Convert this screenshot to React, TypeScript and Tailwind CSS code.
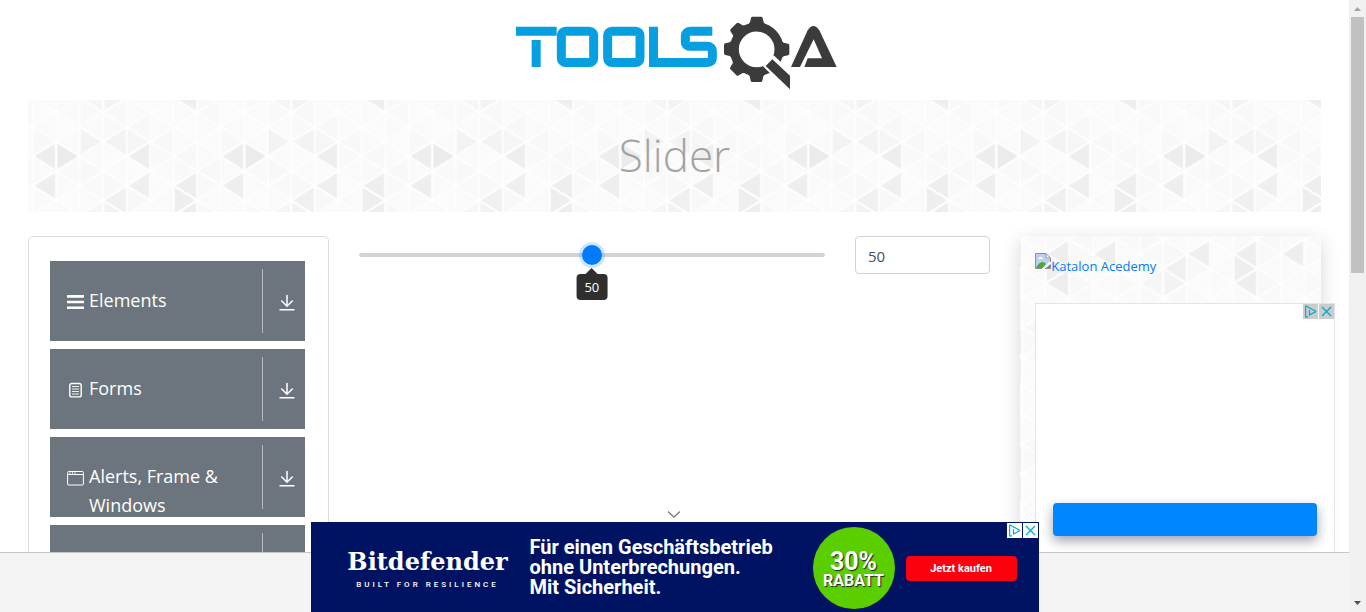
import React, { useState } from "react";

type Tri = [number, number, "l" | "r", string];

const COL = 23.5;
const ROW = 14.667;

// Each triangle: left column index, row index of its middle vertex, direction it points to, fill.
const SHADED: Tri[] = [
  [2, 0, "l", "#f6f6f6"],
  [3, 0, "r", "#f3f3f3"],
  [6, 0, "l", "#eeeeee"],
  [2, 3, "r", "#f3f3f3"],
  [3, 3, "l", "#f3f3f3"],
  [0, 4, "l", "#ededed"],
  [1, 4, "r", "#ebebeb"],
  [4, 4, "l", "#eeeeee"],
  [0, 6, "l", "#eeeeee"],
  [4, 6, "l", "#efefef"],
  [6, 6, "l", "#eeeeee"],
  [6, 7, "r", "#eeeeee"],
  [3, 7, "l", "#f0f0f0"],
  [4, 3, "r", "#f6f6f6"],
];

function triPoints(c: number, r: number, dir: "l" | "r") {
  const x0 = c * COL;
  const x1 = x0 + COL;
  const y = r * ROW;
  return dir === "l"
    ? `${x0},${y} ${x1},${y - ROW} ${x1},${y + ROW}`
    : `${x1},${y} ${x0},${y - ROW} ${x0},${y + ROW}`;
}

const BASE: Tri[] = [];
for (let c = 0; c < 8; c++) {
  for (let r = 0; r < 8; r++) {
    const tone = ["#fafafa", "#f8f8f8", "#fbfbfb", "#f9f9f9", "#fafafa"][(c * 3 + r * 2) % 5];
    BASE.push([c, r, (c + r) % 2 === 0 ? "l" : "r", tone]);
  }
}

// Row 0 straddles the tile's edge, so it is repeated one tile height below.
const TRIANGLES: Tri[] = [...BASE, ...SHADED].flatMap(([c, r, d, f]): Tri[] =>
  r === 0 ? [[c, 0, d, f], [c, 8, d, f]] : [[c, r, d, f]]
);

function Triangles({ id, x, y }: { id: string; x: number; y: number }) {
  return (
    <svg className="absolute inset-0 h-full w-full" aria-hidden="true">
      <defs>
        <pattern id={id} width="188" height="117.333" patternUnits="userSpaceOnUse" patternTransform={`translate(${x} ${y})`}>
          <rect width="188" height="118" fill="#fafafa" />
          {TRIANGLES.map(([c, r, d, fill], i) => (
            <polygon key={i} points={triPoints(c, r, d)} fill={fill} />
          ))}
          {TRIANGLES.map(([c, r, d], i) => (
            <polygon key={i} points={triPoints(c, r, d)} fill="none" stroke="#fefefe" strokeWidth="1.6" strokeLinejoin="round" />
          ))}
        </pattern>
      </defs>
      <rect width="100%" height="100%" fill={`url(#${id})`} />
    </svg>
  );
}

function Logo() {
  return (
    <svg viewBox="0 0 1017 285" className="h-[95px] w-[339px]" role="img" aria-label="Tools QA">
      <g fill="none" stroke="#069fdf" strokeWidth="27">
        <path d="M33 78.500H155M93.500 105V186" />
        <rect x="169" y="78.500" width="97" height="94" rx="13" />
        <rect x="308" y="78.500" width="97" height="94" rx="13" />
        <path d="M445.500 65V172.500H605Q622 172.500 622 158V139Q622 124 605 124H558Q541 124 541 110V94Q541 78.500 558 78.500H622" />
      </g>
      <g fill="#3b3b3c">
        <circle cx="755" cy="133" r="67" fill="none" stroke="#3b3b3c" strokeWidth="27" />
        {[0, 90, 135, 180, 225, 270, 315].map((a) => (
          <path key={a} transform={`rotate(${a} 755 133)`} d="M727 62L735 52L738 39Q739 35 743 35H768Q772 35 773 39L776 52L784 62Z" />
        ))}
        <path d="M806 151L875 216V285L774 184Z" fill="#fff" />
        <path d="M802 163L855 212V253L782 183Z" />
        <path d="M858 186L908 76Q925 50 943 76L995 186H898L908 160H951L926 103L885 186Z" />
      </g>
    </svg>
  );
}

function BarsIcon() {
  return (
    <svg viewBox="0 0 17 16" className="h-4 w-[17px]" fill="#fff" aria-hidden="true">
      <path d="M0 1h17v2.700H0zM0 6.700h17v2.600H0zM0 12.400h17v2.600H0z" />
    </svg>
  );
}

function FormIcon() {
  return (
    <svg viewBox="0 0 17 16" className="h-4 w-[17px]" fill="none" stroke="#fff" aria-hidden="true">
      <rect x="2.800" y="1.500" width="11.400" height="13.400" rx="2" strokeWidth="1.400" />
      <path d="M5 4.500h7M5 7h7M5 9.500h7M5 12h7" strokeWidth=".9" />
    </svg>
  );
}

function WindowIcon() {
  return (
    <svg viewBox="0 0 17 16" className="h-4 w-[17px]" fill="none" stroke="#fff" aria-hidden="true">
      <rect x=".6" y="1.500" width="15.800" height="13.500" rx="1" strokeWidth="1" />
      <path d="M1 4.500h15" strokeWidth="1" />
      <path d="M2.500 3h1M5 3h1M7.500 3h1" strokeWidth="1.400" />
    </svg>
  );
}

function DownloadIcon() {
  return (
    <svg viewBox="0 0 16 17" className="h-[17px] w-4" fill="none" stroke="#fff" strokeWidth="1.500" aria-hidden="true">
      <path d="M8 1v11M2.300 6.500L8 12.200l5.700-5.700M.5 15.800h15" />
    </svg>
  );
}

function MenuItem({ icon, label, name }: { icon?: React.ReactNode; label?: string; name?: string }) {
  return (
    <button type="button" aria-label={name} className="flex h-20 w-full shrink-0 items-start overflow-hidden bg-[#6c757d] text-left text-white">
      <span className="flex flex-1 items-start gap-1 pt-[25px] pl-[17px]">
        <span className="mt-2 w-[18px]">{icon}</span>
        <span className="w-[150px] text-[18px] leading-[29px]">{label}</span>
      </span>
      <span className="mt-2 flex h-16 w-[43px] items-center justify-center border-l border-[#b9babb] pt-[3px] pl-[7px]">
        <DownloadIcon />
      </span>
    </button>
  );
}

function AdControls({ tone }: { tone: "gray" | "white" }) {
  const bg = tone === "gray" ? "bg-[#cccccc]" : "bg-white";
  return (
    <div className="flex gap-px">
      <button type="button" aria-label="AdChoices" className={`flex size-[15px] items-center justify-center ${bg}`}>
        <svg viewBox="0 0 15 15" className="size-[15px]" fill="none" stroke="#00aecd" strokeWidth="1.200">
          <path d="M5 12.700L3.200 13.200Q2.600 13.200 2.600 12.500V2.700Q2.600 1.800 3.500 2.200L12.300 7.100Q12.900 7.500 12.300 7.900L6.500 11V6M6.500 3.800V4.800" />
        </svg>
      </button>
      <button type="button" aria-label="Close ad" className={`flex size-[15px] items-center justify-center ${bg}`}>
        <svg viewBox="0 0 15 15" className="size-[15px]" fill="none" stroke="#00aecd" strokeWidth="1.400">
          <path d="M3 3L12 12M12 3L3 12" />
        </svg>
      </button>
    </div>
  );
}

function BrokenImageIcon() {
  return (
    <svg viewBox="0 0 16 16" className="mt-px size-4 shrink-0" aria-hidden="true">
      <path d="M.5.5H11L15.500 5V15.500H.5Z" fill="#fff" />
      <path d="M1 1H10.500V5.500H15V8L8 15H1Z" fill="#b9cff5" />
      <path d="M3 6Q3 4.500 4.500 4.500Q5.500 3 6.800 4.500Q8 4.700 8 6Z" fill="#fff" />
      <path d="M1 15Q4 9 7.500 9Q9.500 9 11 11L7.500 15ZM11 15L15 11.500V15Z" fill="#4fa82c" />
      <path d="M15.500 9V5L11 .5H.5V15.500H7M11 .5V5H15.500M10 15.500H15.500V11.500" fill="none" stroke="#8f8f8f" />
    </svg>
  );
}

function SliderControl() {
  const [value, setValue] = useState(50);
  return (
    <section className="col-span-2 grid grid-cols-4 items-start gap-[30px]">
      <div className="relative col-span-3 flex h-[38px] items-center">
        <input
          type="range"
          aria-label="Slider"
          min={0}
          max={100}
          value={value}
          onChange={(e) => setValue(Number(e.target.value))}
          className="h-5 w-full appearance-none bg-transparent [&::-webkit-slider-runnable-track]:h-1 [&::-webkit-slider-runnable-track]:rounded-full [&::-webkit-slider-runnable-track]:bg-[#ced4da] [&::-webkit-slider-thumb]:-mt-2 [&::-webkit-slider-thumb]:size-5 [&::-webkit-slider-thumb]:appearance-none [&::-webkit-slider-thumb]:rounded-full [&::-webkit-slider-thumb]:bg-[#007bff] [&::-webkit-slider-thumb]:shadow-[0_0_0_3px_rgba(0,123,255,0.2)]"
        />
        <output
          className="absolute top-8 flex -translate-x-1/2 flex-col items-center"
          style={{ left: `calc(${value}% + ${(50 - value) * 0.2}px)` }}
        >
          <span className="border-x-[6px] border-b-[6px] border-x-transparent border-b-[#2f2f2f]" />
          <span className="rounded bg-[#2f2f2f] px-2 text-[13px] leading-[26px] text-white">{value}</span>
        </output>
      </div>
      <input
        aria-label="Slider value"
        value={value}
        onChange={(e) => setValue(Number(e.target.value) || 0)}
        className="h-[38px] w-full rounded border border-[#ced4da] bg-white px-3 pt-px text-[15px] text-[#495057]"
      />
    </section>
  );
}

export default function App() {
  return (
    <div className="flex h-screen overflow-hidden bg-white font-['Open_Sans','Noto_Sans',sans-serif]">
      <div className="relative min-w-0 flex-1 overflow-hidden">
        <header className="flex h-[100px] items-end justify-center">
          <Logo />
        </header>
        <main className="px-7">
          <div className="relative flex h-28 items-center justify-center overflow-hidden pb-0.5">
            <Triangles id="banner" x={4.7} y={-2.3} />
            <h1 className="relative text-[44px] font-light text-[#a3a3a3]">Slider</h1>
          </div>
          <div className="mt-6 grid grid-cols-4 gap-[30px]">
            <nav className="flex flex-col gap-2 rounded-[5px] border border-[#dddddd] pt-6 pr-[23px] pb-6 pl-[21px]">
              <MenuItem icon={<BarsIcon />} label="Elements" />
              <MenuItem icon={<FormIcon />} label="Forms" />
              <MenuItem icon={<WindowIcon />} label="Alerts, Frame & Windows" />
              <MenuItem name="Widgets" />
            </nav>
            <SliderControl />
            <aside className="relative pt-4 pl-[15px] shadow-[0_5px_18px_rgba(0,0,0,0.16)]">
              <Triangles id="card" x={72.7} y={-70} />
              <a href="#katalon" className="relative flex h-[51px] items-start text-[13px] leading-[28px] text-[#007bff]">
                <BrokenImageIcon />
                Katalon Acedemy
              </a>
              <div className="relative flex h-[300px] w-[300px] flex-col border border-[#e4e4e4] bg-white">
                <div className="flex justify-end">
                  <AdControls tone="gray" />
                </div>
                <button
                  type="button"
                  aria-label="Open ad"
                  className="mx-[17px] mt-[184px] h-[33px] rounded bg-[#0087ff] shadow-[0_5px_12px_rgba(20,20,60,0.4)]"
                />
              </div>
            </aside>
          </div>
        </main>

        <footer className="absolute inset-x-0 bottom-0 flex h-[60px] items-end justify-center border-t border-[#c6c6c6] bg-[#f4f4f4]">
          <div className="flex shrink-0 flex-col items-center">
            <button type="button" aria-label="Collapse" className="flex h-4 w-8 items-center justify-center">
              <svg viewBox="0 0 14 8" className="h-2 w-[14px]" fill="none" stroke="#7d7d7d" strokeWidth="1.300">
                <path d="M0 1.500L6 7L12 1.500" />
              </svg>
            </button>
            <div className="relative flex h-[90px] w-[728px] items-center bg-[#001363] text-white">
              <div className="ml-[37px] flex w-[160px] flex-col items-center pt-1.5">
                <span className="font-['DejaVu_Serif',serif] text-[24px] leading-[30px] font-bold">Bitdefender</span>
                <span className="font-[Roboto,sans-serif] text-[8px] leading-4 font-medium tracking-[3px] whitespace-nowrap">BUILT FOR RESILIENCE</span>
              </div>
              <p className="ml-[22px] w-[283px] font-[Roboto,sans-serif] text-[20px] leading-5 font-bold">
                Für einen Geschäftsbetrieb
                <br />
                ohne Unterbrechungen.
                <br />
                Mit Sicherheit.
              </p>
              <div className="mt-0.5 flex size-[82px] flex-col items-center justify-center rounded-full bg-[#5bce00] pt-1 font-[Roboto,sans-serif] [text-shadow:1px_1px_1px_#222]">
                <span className="text-[25px] leading-[22px] font-bold">30%</span>
                <span className="text-[16px] leading-4 font-bold">RABATT</span>
              </div>
              <button type="button" className="mt-0.5 ml-[11px] h-[25px] w-[111px] rounded bg-[#fb000d] pt-0.5 font-[Roboto,sans-serif] text-[11px] font-bold">
                Jetzt kaufen
              </button>
              <div className="absolute top-px right-px">
                <AdControls tone="white" />
              </div>
            </div>
          </div>
        </footer>
      </div>

      <div className="flex w-[17px] flex-col items-center bg-[#f1f1f1]" aria-hidden="true">
        <svg viewBox="0 0 17 17" className="size-[17px]" fill="#a3a3a3">
          <path d="M5 11L8.500 7L12 11Z" />
        </svg>
        <div className="h-64 w-[13px] bg-[#c1c1c1]" />
        <svg viewBox="0 0 17 17" className="mt-auto size-[17px]" fill="#505050">
          <path d="M5 6L8.500 10L12 6Z" />
        </svg>
      </div>
    </div>
  );
}
